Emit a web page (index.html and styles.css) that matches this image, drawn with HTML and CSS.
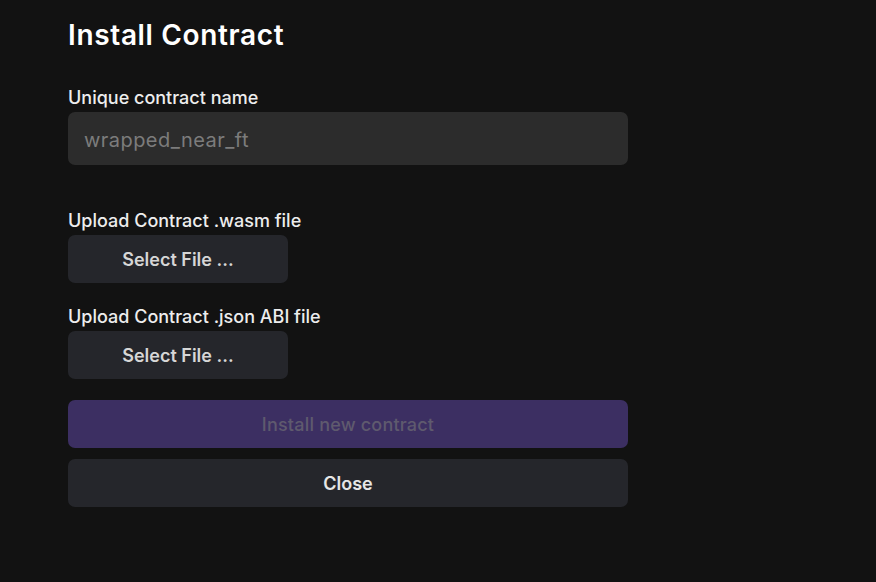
FILE: index.html
```html
<!DOCTYPE html>
<html lang="en">
<head>
<meta charset="utf-8">
<title>Install Contract</title>
<link rel="stylesheet" href="styles.css">
</head>
<body>
<main class="page">
  <h1 class="title">Install Contract</h1>
  <div class="group group-name">
    <label class="label" for="name">Unique contract name</label>
    <input class="input" id="name" type="text" placeholder="wrapped_near_ft">
  </div>
  <div class="group group-wasm">
    <div class="label">Upload Contract .wasm file</div>
    <button class="btn btn-file" type="button">Select File ...</button>
  </div>
  <div class="group group-abi">
    <div class="label">Upload Contract .json ABI file</div>
    <button class="btn btn-file" type="button">Select File ...</button>
  </div>
  <button class="btn btn-wide btn-primary" type="button" disabled>Install new contract</button>
  <button class="btn btn-wide btn-close" type="button">Close</button>
</main>
</body>
</html>
```
FILE: styles.css
```css
* { box-sizing: border-box; }
html, body {
  margin: 0;
  padding: 0;
  background: #121212;
  height: 100%;
}
body {
  font-family: Inter, "Noto Sans", sans-serif;
  color: #ececec;
}
.page {
  width: 560px;
  margin-left: 68px;
  padding-top: 18px;
  display: flex;
  flex-direction: column;
}
.title {
  margin: 0;
  font-size: 28px;
  line-height: 34px;
  font-weight: 600;
  color: #ffffff;
  letter-spacing: 0.65px;
}
.group {
  display: flex;
  flex-direction: column;
  align-items: flex-start;
}
.group-name { margin-top: 34px; }
.group-wasm { margin-top: 44px; }
.group-abi { margin-top: 22px; }
.label {
  font-size: 18px;
  line-height: 24px;
  font-weight: 500;
  color: #ededed;
  margin-bottom: 2px;
}
.input {
  width: 100%;
  height: 53px;
  border: none;
  outline: none;
  border-radius: 7px;
  background: #2c2c2c;
  padding: 2px 16px 0;
  font-family: inherit;
  font-size: 20px;
  letter-spacing: 0.45px;
  color: #e0e0e0;
}
.input::placeholder { color: #7c7c7c; }
.btn {
  border: none;
  border-radius: 7px;
  font-family: inherit;
  font-size: 18px;
  font-weight: 600;
  height: 48px;
  cursor: pointer;
}
.btn-file {
  width: 220px;
  background: #25262b;
  color: #d6d6d6;
}
.btn-wide { width: 100%; }
.btn-primary {
  margin-top: 21px;
  background: #3c2f62;
  color: #5f5a6e;
  font-weight: 500;
  letter-spacing: 0.2px;
  cursor: default;
}
.btn-close {
  margin-top: 11px;
  background: #25262b;
  color: #e6e6e6;
}
```
